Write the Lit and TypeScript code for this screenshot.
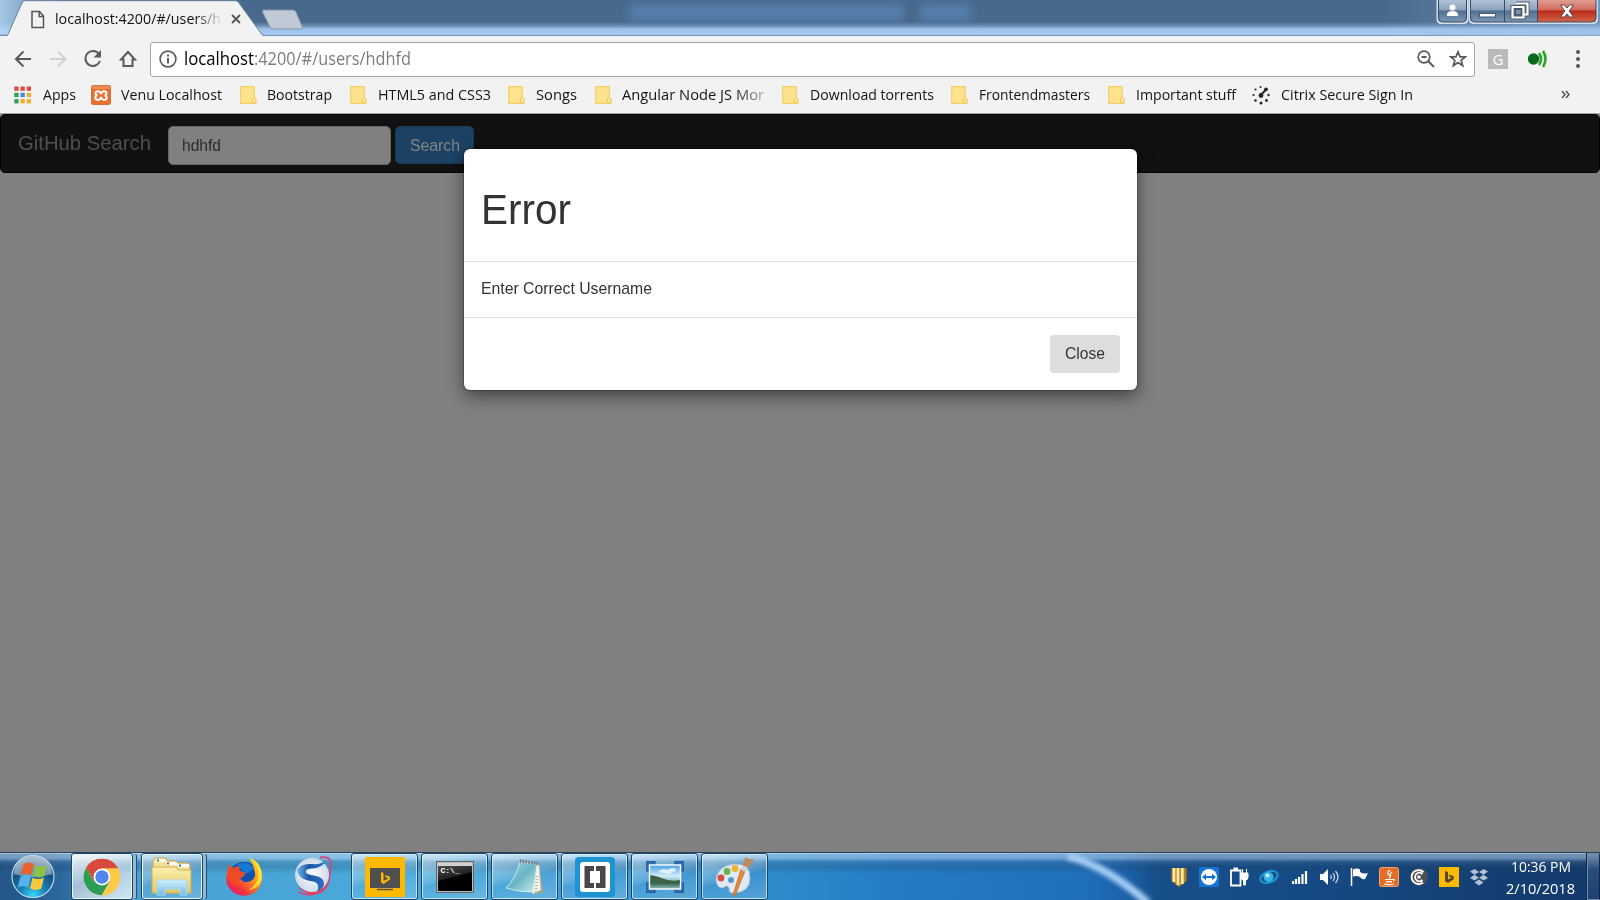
import { LitElement, html, css, svg } from "lit";
import { customElement, property } from "lit/decorators.js";
import { styleMap } from "lit/directives/style-map.js";

const UI = '"Open Sans", "Noto Sans", sans-serif';
const ARIAL = '"Liberation Sans", Arial, sans-serif';
const ctx = document.createElement("canvas").getContext("2d")!;

/** A run of text whose glyphs are condensed or widened to a given width. */
@customElement("fit-text")
class FitText extends LitElement {
  @property() text = "";
  @property() face = "ui";
  @property({ type: Number }) size = 15;
  @property({ type: Number }) width = 100;
  static styles = css`
    :host { display: block; flex: none; }
    .run { display: block; width: max-content; white-space: pre; transform-origin: 0 50%; line-height: 1.3; }
  `;
  render() {
    const family = this.face === "ui" ? UI : ARIAL;
    ctx.font = `${this.size}px ${family}`;
    const k = this.width / ctx.measureText(this.text).width;
    return html`<span class="run" style=${styleMap({
      fontFamily: family,
      fontSize: `${this.size}px`,
      transform: `scaleX(${k})`,
      marginRight: "-100%",
    })}>${this.text}</span>`;
  }
}

const fit = (text: string, width: number, size: number, face = "ui") =>
  html`<fit-text .text=${text} .width=${width} .size=${size} .face=${face} style=${styleMap({ width: `${width}px` })}></fit-text>`;

const icon = (w: number, h: number, body: unknown) =>
  html`<svg class="ico" width=${w} height=${h} viewBox="0 0 ${w} ${h}">${body}</svg>`;

const folder = icon(17, 20, svg`
  <path d="M.7 1.6h13.6v13h1.6v3.7H.7z" fill="#fee38f" stroke="#f3cf68" stroke-width="1.2"/>
  <path d="M12.6 18v-4.2l1.7-1.6 1.6 2V17l-1.3 1.3z" fill="#fee89f" stroke="#f0c651" stroke-width="1"/>`);

const appsGrid = icon(17, 18, svg`${[
  ["#df4a40", "#df4a40", "#df4a40"], ["#2f9e58", "#4387ea", "#eeae2c"], ["#2f9e58", "#eeae2c", "#eeae2c"],
].map((row, r) => row.map((c, i) => svg`<rect x=${0.3 + i * 6.2} y=${0.5 + r * 6.3} width="4.3" height="4.3" fill=${c}/>`))}`);

const xampp = icon(20, 20, svg`
  <rect x=".4" y=".4" width="19.2" height="19.2" rx="2" fill="#e8702c" stroke="#c95a20" stroke-width=".8"/>
  <rect x="1" y="1" width="18" height="3" fill="#f09a68" opacity=".7"/>
  <path d="M7 6.3C5.300 6.300 4.500 7.200 4.500 8.300S5.400 10 6.200 10.200C5 10.500 4.300 11.400 4.300 12.600s.8 2.300 2.500 2.300c2.600 0 2.700-2.300 3.200-2.300s.6 2.300 3.200 2.300c1.700 0 2.500-1.100 2.500-2.300s-.7-2.100-1.900-2.400c.8-.2 1.700-.8 1.700-1.900s-.8-2-2.500-2c-2.500 0-2.500 2.200-3 2.200S9.500 6.300 7 6.300z" fill="none" stroke="#fff" stroke-width="2"/>`);

const citrix = icon(18, 20, svg`
  <g fill="#262626"><circle cx="1.500" cy="10" r="1.100"/><circle cx="3.500" cy="4.500" r="1.100"/><circle cx="8.500" cy="2" r="1"/>
  <circle cx="3.500" cy="15.500" r="1.300"/><circle cx="9" cy="18" r="1.500"/><circle cx="14.500" cy="15.500" r="1.400"/><circle cx="16.500" cy="10" r="1.200"/>
  <circle cx="9" cy="10.500" r="2.400"/><circle cx="14" cy="4.300" r="1.900"/></g><path d="M9 10l5-5.500" stroke="#262626" stroke-width="2"/>`);

const marks = [
  { i: appsGrid, slot: 29, t: "Apps", w: 33, cell: 77 },
  { i: xampp, slot: 30, t: "Venu Localhost", w: 101, cell: 149 },
  { i: folder, slot: 27, t: "Bootstrap", w: 65, cell: 110 },
  { i: folder, slot: 28, t: "HTML5 and CSS3", w: 113, cell: 158 },
  { i: folder, slot: 28, t: "Songs", w: 41, cell: 87 },
  { i: folder, slot: 27, t: "Angular Node JS Mor", w: 142, cell: 187, fade: true },
  { i: folder, slot: 28, t: "Download torrents", w: 124, cell: 169 },
  { i: folder, slot: 28, t: "Frontendmasters", w: 111, cell: 157 },
  { i: folder, slot: 28, t: "Important stuff", w: 100, cell: 144 },
  { i: citrix, slot: 29, t: "Citrix Secure Sign In", w: 132, cell: 162 },
];

const chromeLogo = icon(38, 38, svg`
  <circle cx="19" cy="19" r="18.300" fill="#fbc540"/>
  <path d="M19 19L3.200 9.800A18.300 18.300 0 0 1 34.900 10H19z" fill="#d8493e"/>
  <path d="M3.200 9.800A18.300 18.300 0 0 0 19 37.300L27 23.500 19 19 11 23.500z" fill="#2a9d57"/>
  <path d="M19 10.300h16A18.300 18.300 0 0 1 18.700 37.300L26.800 23z" fill="#fcca48"/>
  <path d="M3.200 9.800A18.300 18.300 0 0 1 34.900 10.300H19L11.500 23.500z" fill="#d8493e"/>
  <circle cx="19" cy="19" r="8.400" fill="#fff"/><circle cx="19" cy="19" r="6.700" fill="#4e88ef"/>`);

const explorer = icon(42, 40, svg`
  <defs><linearGradient id="f" x2="0" y2="1"><stop stop-color="#fbf0ae"/><stop offset="1" stop-color="#e3c764"/></linearGradient>
  <linearGradient id="g" x2="0" y2="1"><stop stop-color="#d2effa"/><stop offset="1" stop-color="#74bce4"/></linearGradient></defs>
  <path d="M2 8V3l2-2h11l2 3h8l2 2h10l2 2v26H2z" fill="#f3e39a" stroke="#c7a750"/>
  <rect x="5" y="2" width="9" height="3" fill="#fff"/><path d="M6 3.500h2" stroke="#278b3b" stroke-width="2"/>
  <rect x="15" y="5" width="11" height="3" fill="#fff"/><path d="M16 6.500h2" stroke="#c43526" stroke-width="2"/>
  <rect x="27" y="7" width="11" height="3" fill="#fff"/><path d="M28 8.500h2" stroke="#2775bd" stroke-width="2"/>
  <path d="M1 10h24l2 3h13v23H1z" fill="url(#f)" stroke="#cfae55"/>
  <path d="M6 38V25q0-2 2-2h26q2 0 2 2v13h-7v-6H14v6z" fill="url(#g)" stroke="#a5daf0"/>`);

const firefox = icon(38, 40, svg`
  <defs><linearGradient id="ff" x1="1" y1="0" x2=".2" y2="1"><stop stop-color="#ffe52b"/><stop offset=".45" stop-color="#ff9a1c"/><stop offset=".8" stop-color="#f4333b"/><stop offset="1" stop-color="#e31587"/></linearGradient></defs>
  <circle cx="19" cy="21" r="16" fill="#164fae"/><path d="M12 8q10-6 17 4l-8 5z" fill="#1679d4"/>
  <path d="M4 7q1 4 4 4 4-2 7-1-2 3 0 4l5 2q-1 4-5 5 2 5 8 4 8-2 7-9Q28 6 24 1q9 3 12 12 4 15-7 23-11 6-21-1Q-1 28 2 16 3 11 4 7z" fill="url(#ff)"/>
  <path d="M25 1q10 8 8 20-2 9-10 12 14-2 14-15Q36 5 25 1z" fill="#ffdf35"/>
  <path d="M4 7q1 4 4 4 4-2 7-1-2 3 0 4l5 2q-1 4-5 5-4 4 0 9Q4 29 2 18z" fill="#ee4a25"/>`);

const ucLogo = icon(40, 42, svg`
  <defs><radialGradient id="u"><stop stop-color="#fff"/><stop offset="1" stop-color="#cdd9eb"/></radialGradient>
  <linearGradient id="us" x2="1"><stop stop-color="#6db4e6"/><stop offset=".4" stop-color="#1a56a8"/><stop offset="1" stop-color="#2a78c8"/></linearGradient></defs>
  <path d="M26 1.500q10-1.500 10.500 4.500 1 19-8 27.500-11 9-24 2.500" fill="none" stroke="#d8447c" stroke-width="1.800"/>
  <path d="M3 30q12 9 23 2 8-6 9.500-13 1 12-8.500 18-13 5-24-7z" fill="#dd3f62"/>
  <circle cx="18" cy="19" r="17" fill="url(#u)"/>
  <path d="M3 14Q7 7 18 8q9 1 15-4Q27 13 17 12.500q-6 .5-5 4 1 2 8 3 11 2 10 9-1 5-7 7 3-6-1-9-2-1-8-2Q5 23 3 14z" fill="url(#us)"/>`);

const bingTv = icon(40, 40, svg`
  <rect width="40" height="40" fill="#ffb900"/><rect x="5" y="11" width="30" height="20" fill="#505050"/>
  <path d="M12 32.500h16" stroke="#505050" stroke-width="1.500"/>
  <path d="M16 15l2.500 1v8l5-2.500-2.500-1-1-2.500 5 1.800v2.700L18.500 27 16 25.300z" fill="#ffb900"/>`);

const cmd = html`<div class="cmd"><i></i><b>C:\\_</b></div>`;

const notepad = icon(40, 38, svg`
  <defs><linearGradient id="n" x2="1" y2="1"><stop stop-color="#9fd9e0"/><stop offset=".5" stop-color="#68b6c3"/><stop offset="1" stop-color="#cfeef0"/></linearGradient></defs>
  <path d="M34 6l4 28-7 2z" fill="#b6a169"/><path d="M15 4l19 3 2 25-8 4z" fill="#f3f4ef" stroke="#b8bcae" stroke-width=".8"/>
  <path d="M15 4l17 3-4 27Q13 34 1 30 11 20 15 4z" fill="url(#n)" stroke="#dff4f4" stroke-width=".8"/>
  <path d="M31 34l1-17" stroke="#b3bab4" stroke-dasharray="1 2" stroke-width="3"/>
  <path d="M15 3l19 3" stroke="#777c78" stroke-width="3.500" stroke-dasharray="1.500 1.300"/>`);

const brackets = icon(40, 40, svg`
  <rect width="40" height="40" rx="4" fill="#1d93d2"/><rect x="5" y="5" width="30" height="30" rx="3" fill="#fff"/>
  <path d="M9.500 9h9.500v5h-4v12h4v5H9.500zM30.500 9H21v5h4v12h-4v5h9.500z" fill="#474747"/>`);

const picture = icon(38, 32, svg`
  <defs><linearGradient id="p" x2="0" y2="1"><stop stop-color="#3e9fe6"/><stop offset=".45" stop-color="#d2ecfa"/><stop offset=".6" stop-color="#a8cfd8"/><stop offset=".78" stop-color="#406a53"/><stop offset="1" stop-color="#91c0c4"/></linearGradient></defs>
  <path d="M0 0h9v5H5v5H0zM38 0h-9v5h4v5h5zM0 32h9v-5H5v-5H0zM38 32h-9v-5h4v-5h5z" fill="#2f6fae" stroke="#1f5590"/>
  <rect x="3.500" y="4" width="31" height="24" fill="url(#p)" stroke="#f6fafc" stroke-width="1.500"/>
  <path d="M12 11q5-5 9-2 6-4 10 0l-8 4z" fill="#fff" opacity=".7"/><path d="M4.300 14q7 1 14 4 8 3 15.500 1v3.500H4.300z" fill="#3d6347"/>`);

const paint = icon(42, 42, svg`
  <path d="M20 8Q36 7 36 22 36 37 18 37 15 37 15 32q-2-4-6 0Q2 32 2 23 4 10 20 8z" fill="#dfeaf3" stroke="#a9bed0"/>
  <circle cx="17" cy="24" r="3" fill="#5599d2"/><circle cx="7" cy="22" r="3.400" fill="#dd4a3f"/><circle cx="13" cy="15.500" r="3.400" fill="#68b34c"/><circle cx="21" cy="12.500" r="3.500" fill="#eeb334"/>
  <path d="M31 15l-10 25-2-1 8-26z" fill="#e78a38" stroke="#b96825" stroke-width=".7"/><path d="M27 14l2-5 5 2-2 5z" fill="#cdd3d8"/>
  <path d="M28 9q3-3 3-8l4 2 5 0-5 9z" fill="#bb8a5e"/>`);

const apps: { i: unknown; k: string }[] = [
  { i: chromeLogo, k: "on stack" }, { i: explorer, k: "open stack exp" }, { i: firefox, k: "bare" }, { i: ucLogo, k: "bare" },
  { i: bingTv, k: "open" }, { i: cmd, k: "open" }, { i: notepad, k: "open" }, { i: brackets, k: "open" }, { i: picture, k: "open" }, { i: paint, k: "open" },
];

const tray = [
  svg`<path d="M2.500 1h15v13l-7.500 6-7.500-6z" fill="#b37f26"/><path d="M5 1v14M9 1v17M13.300 1v16" stroke="#ffe9a0" stroke-width="2.800"/>`,
  svg`<rect width="20" height="20" rx="1" fill="#1673d6"/><circle cx="10" cy="10" r="8" fill="#fff"/><path d="M3 10l4-3.300v2.300h6V6.700l4 3.300-4 3.300V11H7v2.300z" fill="#1673d6"/>`,
  svg`<path d="M2 3.500h9.500v15H2zM4.500 1.500h4.500" fill="none" stroke="#fff" stroke-width="1.800"/><path d="M12 6h7v4q0 3-2.500 3V18h-2v-5q-2.500 0-2.500-3zM13.500 2v4M17.500 2v4" fill="#fff" stroke="#fff" stroke-width="1"/>`,
  svg`<g transform="rotate(-22 10 10)"><ellipse cx="10" cy="10" rx="9" ry="5.500" fill="none" stroke="#1a94d0" stroke-width="2.200"/></g><circle cx="9.500" cy="10" r="5" fill="#37b5e9"/><circle cx="8.500" cy="8.500" r="2" fill="#c4f0ff"/>`,
  svg`<path d="M4 17v-3M7 17v-5M10 17V10M13.500 17V7M17 17V4" stroke="#fff" stroke-width="2.200"/>`,
  svg`<path d="M1 7h3l5-5v16l-5-5H1z" fill="#fff"/><path d="M11.500 8q1.500 2 0 4M14 6q3 4 0 8M16.500 4q5 6 0 12" fill="none" stroke="#cfdef0" stroke-width="1.200"/>`,
  svg`<path d="M2.500 1v18" stroke="#fff" stroke-width="1.500"/><path d="M4 2.500q4-2 7 0v2.500q4 2.500 8 1l-3 6q-3 1-5-2-3-1.500-7-.5z" fill="#fff"/>`,
  svg`<rect x=".5" y=".5" width="19" height="19" rx="2" fill="#e46d28" stroke="#f4a36b"/><path d="M11 3q-4 3-1 5t0 3M13 5q-3 2-1 4M6 12.500h7.500q3-1 1 1.500M7 14.800h6M5 17q5 1.500 10 0" fill="none" stroke="#fff" stroke-width="1.200"/>`,
  svg`<circle cx="10" cy="10" r="9" fill="#4c4f54"/><path d="M14 15.500A7 7 0 1 1 14.500 5M13.500 13A4.300 4.300 0 1 1 13.500 7" fill="none" stroke="#fff" stroke-width="1.800"/><circle cx="10" cy="10" r="1.800" fill="#fff"/>`,
  svg`<rect width="20" height="20" fill="#ffb900"/><path d="M6 4l3 1v7.500l3.500-1.700-1.800-.9-1-2.500 5 1.900v3L9 16l-3-1.700z" fill="#504a32"/>`,
  svg`<g fill="#b3c1d2"><path d="M1 4.500L5.500 2 10 5 5.500 7.800zM10 5l4.500-3L19 4.500l-4.500 3.300zM1 11l4.500-3.200L10 10.800l-4.500 2.800zM10 10.800l4.500-3L19 11l-4.500 2.600zM5.500 15.500l4.500-3 4.500 3-4.500 3z"/></g>`,
];

@customElement("app-root")
class AppRoot extends LitElement {
  static styles = css`
    :host { display: flex; flex-direction: column; width: 1600px; height: 900px; overflow: hidden; background: #808080; }
    * { box-sizing: border-box; }
    svg { display: block; flex: none; }
    .titlebar { height: 36px; flex: none; display: flex; position: relative; overflow: hidden;
      background: linear-gradient(90deg, rgba(176,211,242,.9), rgba(127,171,212,0) 70px, transparent 1380px, rgba(150,190,225,.55) 1600px),
        linear-gradient(#49698c 0, #49698c 22px, #6c90b6 26px, #9fc4ec 29px, #a3c8ef 35px, #7493b7 35px); }
    .tabs { position: absolute; left: 0; top: 0; }
    .tabrow { position: relative; display: flex; align-items: center; height: 36px; padding: 2px 0 0 31px; width: 250px; }
    .tabtext { width: 165px; margin-left: 10px; overflow: hidden; -webkit-mask: linear-gradient(90deg, #000 140px, transparent 168px); color: #111; }
    .tabx { margin-left: 11px; }
    .ghost { position: absolute; left: 628px; top: 4px; width: 360px; display: flex; gap: 16px; filter: blur(4px); }
    .ghost i { height: 17px; background: #6096cd; opacity: .48; width: 276px; flex: none; border-radius: 6px; }
    .ghost i + i { width: 52px; }
    .caps { position: absolute; right: 0; top: 0; }
    .toolbar { height: 41px; flex: none; background: #f2f2f2; display: flex; align-items: center; padding: 5px 0 0 14px; }
    .nav { display: flex; width: 136px; gap: 15.800px; }
    .omni { width: 1325px; height: 35px; background: #fff; border: 1px solid #a5a5a5; border-radius: 3px; display: flex; align-items: center; padding: 0 7px 0 8px; }
    .url { display: flex; margin-left: 7px; flex: 1; color: #000; }
    .url .dim { color: #7d7d7d; }
    .omni svg + svg { margin-left: 14px; }
    .ext { display: flex; align-items: center; margin-left: 13px; }
    .g { width: 20px; height: 20px; background: #bababa; color: #fff; font: 15px/20px "Open Sans", sans-serif; text-align: center; }
    .cast { margin-left: 19px; }
    .dots { margin-left: 26px; }
    .marks { height: 37px; flex: none; background: #f2f2f2; border-bottom: 1px solid #a9a9a9; display: flex; align-items: center; padding: 0 0 1px 14px; color: #141414; }
    .mark { display: flex; align-items: center; flex: none; }
    .slot { flex: none; }
    .fade { -webkit-mask: linear-gradient(90deg, #000 112px, rgba(0,0,0,.3) 142px); }
    .more { margin-left: 147px; }
    .page { flex: 1; position: relative; background: #808080; }
    .navbar { height: 59px; background: #111; border: 1px solid #040404; border-radius: 5px; display: flex; padding: 11px 0 0 17px; }
    .brand { color: #4f4f4f; padding-top: 3px; width: 150px; }
    .input { width: 223px; height: 39px; background: #808080; border: 1px solid #666; border-radius: 5px; padding: 8px 13px; color: #2b2b2b; }
    .btn { width: 79px; height: 38px; margin-left: 4px; background: #1b4265; border: 1px solid #173a58; border-radius: 5px; padding: 8px 14px; color: #858585; }
    .modal { position: absolute; left: 464px; top: 35px; width: 673px; height: 241px; background: #fff; border-radius: 6px; color: #333;
      box-shadow: 0 6px 17px rgba(0,0,0,.5), 0 0 0 1px rgba(0,0,0,.2); display: flex; flex-direction: column; }
    .mhead { height: 113px; border-bottom: 1px solid #e2e2e2; padding: 34px 17px 0; }
    .mbody { height: 56px; border-bottom: 1px solid #e2e2e2; padding: 16px 16.500px 0; }
    .mfoot { display: flex; justify-content: flex-end; padding: 17px 17px 0; }
    .close { width: 70px; height: 38px; background: #ddd; border-radius: 4px; padding: 8px 15px; }
    .taskbar { height: 48px; flex: none; display: flex; position: relative; border-top: 1px solid #27435f; overflow: hidden;
      background: linear-gradient(rgba(225,240,252,.9) 0, rgba(210,225,242,.5) 1px, rgba(180,210,238,.55) 5px, rgba(70,110,150,.35) 9px, rgba(30,70,100,.25) 14px, rgba(20,60,100,0) 21px),
        linear-gradient(90deg, #235588 0, #2c679c 60px, #4ba0d2 140px, #48aadb 400px, #3b98d4 650px, #2b89c9 800px, #267bc4 900px, #2070ba 1080px, #1d62ab 1125px, #174f8b 1155px, #164a85 1300px, #13396a 1600px); }
    .swoosh { position: absolute; left: 1040px; top: 0; }
    .start { width: 71px; padding: 1px 0 0 11px; flex: none; }
    .task { width: 67px; height: 47px; margin-right: 3px; flex: none; display: flex; align-items: center; justify-content: center; border-radius: 3px; border: 1px solid transparent; }
    .open { border-color: #1a4567; box-shadow: inset 0 0 0 1px rgba(225,244,255,.75); background: linear-gradient(165deg, rgba(255,255,255,.55), rgba(255,255,255,.2) 45%, rgba(255,255,255,.05) 55%, rgba(255,255,255,.2)); }
    .on { border-color: #1a4567; box-shadow: inset 0 0 0 1px #fff; background: linear-gradient(160deg, rgba(255,255,255,.92), rgba(255,255,255,.55) 50%, rgba(255,255,255,.75)); }
    .bare { padding-right: 1px; }
    .stack { width: 62px; margin-right: 8px; box-shadow: inset 0 0 0 1px #e8f6ff, 4px 0 0 -1px rgba(190,220,240,.75), 5px 0 0 -1px #23506f; }
    .cmd { width: 36px; height: 30px; background: linear-gradient(165deg, #555, #222 48%, #000 50%); border: 1px solid #bbb; outline: 1px solid #666; }
    .cmd i { display: block; height: 3px; background: #d2d2d2; }
    .cmd b { display: block; color: #fff; font: bold 8px/9px "Liberation Mono", monospace; padding-left: 3px; }
    .tray { position: relative; margin-left: auto; display: flex; align-items: center; gap: 10px; height: 48px; }
    .clock { position: relative; width: 91px; margin-left: 7px; display: flex; flex-direction: column; align-items: center; color: #fff; padding: 4px 2px 0 0; gap: 2.500px; }
    .show { position: relative; width: 13px; border: 1px solid #6e8cae; border-right: 1px solid #12263e; background: linear-gradient(#7891ae, #284d7b 35%, #1c4273); box-shadow: -1px 0 0 #0e2b50; }
  `;

  render() {
    const gray = "#5a5a5a";
    return html`
      <div class="titlebar">
        <div class="ghost"><i></i><i></i></div>
        <svg class="tabs" width="310" height="36">
          <path d="M0 36h7.500L22 3q.8-2 3-2H236q2 0 3 2l21 29q2 4 4 4z" fill="#f2f2f2"/>
          <path d="M0 35.300h7.500L22 3q.8-2.300 3-2.300H236q2 0 3 2.300l21 29q2 3.300 4 3.300" fill="none" stroke="#6983a2" stroke-width="1"/>
          <path d="M264 10h29q2 0 3 2l6.500 15q.5 2-1.500 2H273q-2 0-3-2L262.500 12q-.6-2 1.500-2z" fill="#c0c9d6" stroke="#8495ac"/>
        </svg>
        <div class="tabrow">
          ${icon(14, 19, svg`<path d="M1 1.500h7.500l4 4.500v11.500H1zM8.200 1.500V6.500h4.500" fill="none" stroke="#555" stroke-width="1.500"/>`)}
          <div class="tabtext">${fit("localhost:4200/#/users/h", 166, 15)}</div>
          <svg class="tabx" width="10" height="10" viewBox="0 0 10 10"><path d="M1 1l8 8M9 1L1 9" stroke="#555" stroke-width="1.800"/></svg>
        </div>
        <svg class="caps" width="166" height="26">
          <defs>
            <linearGradient id="cb" x2="0" y2="1"><stop stop-color="#b6c6d8"/><stop offset=".45" stop-color="#8ba2bc"/><stop offset=".5" stop-color="#516f92"/><stop offset="1" stop-color="#7f9cbb"/></linearGradient>
            <linearGradient id="cr" x2="0" y2="1"><stop stop-color="#e2a399"/><stop offset=".45" stop-color="#d0695a"/><stop offset=".5" stop-color="#b92b18"/><stop offset="1" stop-color="#d46a4c"/></linearGradient>
          </defs>
          <path d="M3.500-1V19q0 4 4 4H29.500q4 0 4-4V-1z" fill="url(#cb)" stroke="#d4e0ec" stroke-width="2"/>
          <path d="M4.500-1V18q0 4 4 4H28.500q4 0 4-4V-1z" fill="none" stroke="#33475f"/>
          <path d="M36-1V19q0 4 4 4H104V-1z" fill="url(#cb)"/><path d="M104-1V23h55q4 0 4-4V-1z" fill="url(#cr)"/>
          <path d="M35.500-1V19q0 4 4 4H159q4 0 4-4V-1" fill="none" stroke="#d4e0ec" stroke-width="1.800"/>
          <path d="M36.500-1V18q0 4 4 4H158q4 0 4-4V-1M70.500 0V22M103.500 0V22" fill="none" stroke="#3a4c64"/>
          <circle cx="18.500" cy="7.500" r="3" fill="#fff"/><path d="M13 16v-2q1-3 5.500-3t5.500 3v2z" fill="#fff"/>
          <rect x="45.500" y="13.500" width="16" height="3.500" fill="#fff" stroke="#4c5566"/>
          <path d="M82 3.500h11.500v11h-3M78.500 7h11v10.500h-11z" fill="none" stroke="#4c5566" stroke-width="4"/>
          <path d="M82 3.500h11.500v11h-3M78.500 7h11v10.500h-11z" fill="none" stroke="#fff" stroke-width="2.200"/>
          <rect x="81.500" y="9.500" width="5.500" height="5" fill="#7d93ae" stroke="#4c5566"/>
          <path d="M126.500 5h4l2.500 3 2.500-3h4l-4.300 6 4.300 6h-4l-2.500-3-2.500 3h-4l4.300-6z" fill="#fff" stroke="#5a4650"/>
        </svg>
      </div>

      <div class="toolbar">
        <div class="nav">
          ${icon(18, 20, svg`<path d="M17 10H2M9.500 2.500L2 10l7.500 7.500" fill="none" stroke=${gray} stroke-width="2"/>`)}
          ${icon(20, 20, svg`<path d="M2 10h15M10 2.500l7.500 7.500-7.500 7.500" fill="none" stroke="#d2d2d2" stroke-width="2"/>`)}
          ${icon(20, 20, svg`<path d="M15 5A7.500 7.500 0 1 0 16 12" fill="none" stroke=${gray} stroke-width="2"/><path d="M17 1v7.500H9.500z" fill=${gray}/>`)}
          ${icon(18, 20, svg`<path d="M2 10.500L9 3l7 7.500h-2.500V17h-9v-6.500z" fill="none" stroke=${gray} stroke-width="2"/>`)}
        </div>
        <div class="omni">
          ${icon(18, 18, svg`<circle cx="9" cy="9" r="7.900" fill="none" stroke=${gray} stroke-width="1.600"/><path d="M9 8v5.500M9 4.500v2" stroke=${gray} stroke-width="1.900"/>`)}
          <div class="url">${fit("localhost", 70, 18)}<span class="dim">${fit(":4200/#/users/hdhfd", 157, 18)}</span></div>
          ${icon(18, 18, svg`<circle cx="7" cy="7" r="5.800" fill="none" stroke=${gray} stroke-width="1.700"/><path d="M4.500 7h5M11 11l6 6" stroke=${gray} stroke-width="1.900"/>`)}
          ${icon(18, 18, svg`<path d="M9 1.800l2.100 5h5.300l-4.300 3.500 1.600 5.500L9 12.600l-4.700 3.200 1.600-5.500L1.600 6.800h5.300z" fill="none" stroke=${gray} stroke-width="1.700"/>`)}
        </div>
        <div class="ext">
          <div class="g">G</div>
          <svg class="cast" width="22" height="20"><circle cx="6.500" cy="10" r="5.700" fill="#0b6a1c"/><path d="M12 4q4 6 0 12M16 2q5 8 0 16" fill="none" stroke="#27a52b" stroke-width="2.600"/></svg>
          <svg class="dots" width="6" height="20"><g fill="#555"><circle cx="3" cy="3" r="2"/><circle cx="3" cy="10" r="2"/><circle cx="3" cy="17" r="2"/></g></svg>
        </div>
      </div>

      <div class="marks">
        ${marks.map((m) => html`<div class="mark" style=${styleMap({ width: `${m.cell}px` })}>
          <div class="slot" style=${styleMap({ width: `${m.slot}px` })}>${m.i}</div>
          <div class=${m.fade ? "fade" : ""}>${fit(m.t, m.w, 15)}</div></div>`)}
        <div class="more">${icon(9, 9, svg`<path d="M1 1l3 3.500L1 8M5 1l3 3.500L5 8" fill="none" stroke="#555" stroke-width="1.500"/>`)}</div>
      </div>

      <div class="page">
        <div class="navbar">
          <div class="brand">${fit("GitHub Search", 133, 21, "arial")}</div>
          <div class="input">${fit("hdhfd", 39, 16.4, "arial")}</div>
          <div class="btn">${fit("Search", 50, 16.4, "arial")}</div>
        </div>
        <div class="modal">
          <div class="mhead">${fit("Error", 90, 42.2, "arial")}</div>
          <div class="mbody">${fit("Enter Correct Username", 171, 16.4, "arial")}</div>
          <div class="mfoot"><div class="close">${fit("Close", 40, 16.4, "arial")}</div></div>
        </div>
      </div>

      <div class="taskbar">
        <svg class="swoosh" width="140" height="48"><defs><filter id="b"><feGaussianBlur stdDeviation="2.200"/></filter></defs>
          <path d="M28 3Q68 14 108 50" fill="none" stroke="#a4cdf5" stroke-width="8" filter="url(#b)"/></svg>
        <div class="start">
          ${icon(44, 45, svg`
            <defs><radialGradient id="o" cx=".5" cy=".95" r=".9"><stop stop-color="#37d6f5"/><stop offset=".35" stop-color="#1581b5"/><stop offset=".7" stop-color="#17507f"/><stop offset="1" stop-color="#7d9ab2"/></radialGradient></defs>
            <circle cx="22" cy="22.500" r="21" fill="url(#o)" stroke="#bad8eb" stroke-width="1.200"/>
            <path d="M3 20A19 19 0 0 1 41 20Q22 26 3 20z" fill="#dfe9f2" opacity=".45"/>
            <path d="M12.500 10q5-3 10.500 0l-2.800 11q-5-3-10.500 0z" fill="#e8622c"/><path d="M24.500 11q5 3 11.500 0l-2.700 11q-6 3-11.300-.5z" fill="#8cc342"/>
            <path d="M9.500 22.500q5-3 10.500 0l-2.800 11q-5-3-10.500 0z" fill="#57b2e8"/><path d="M21.500 23.500q5 3 11.500 0l-2.700 11q-6 3-11.300-.5z" fill="#fac83c"/>`)}
        </div>
        ${apps.map((a) => html`<div class="task ${a.k}">${a.i}</div>`)}
        <div class="tray">${tray.map((t) => icon(20, 20, t))}</div>
        <div class="clock">${fit("10:36 PM", 60, 15)}${fit("2/10/2018", 69, 15)}</div>
        <div class="show"></div>
      </div>`;
  }
}
